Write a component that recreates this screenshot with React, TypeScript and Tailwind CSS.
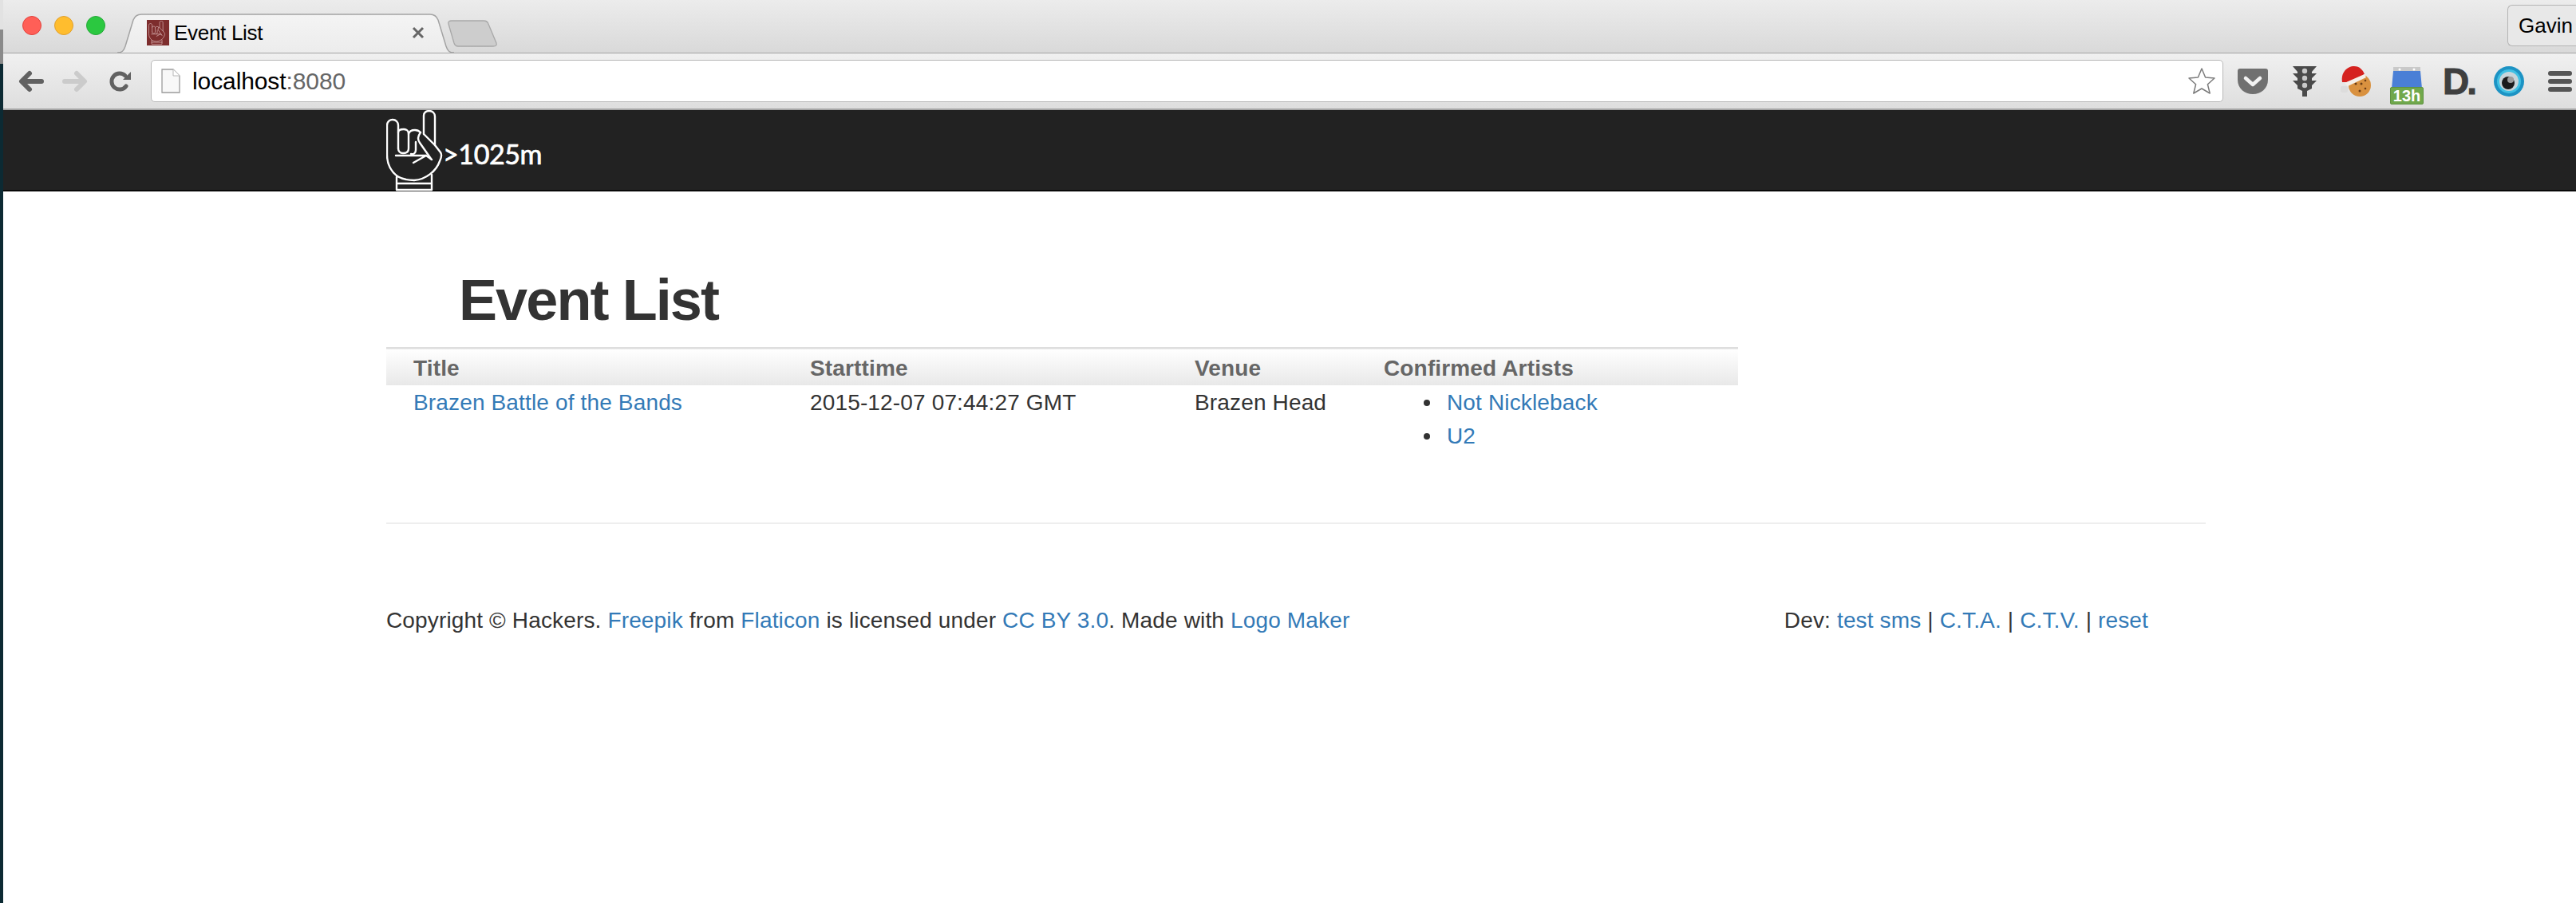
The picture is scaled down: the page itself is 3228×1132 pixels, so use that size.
import { Fragment } from 'react';

const FONT = "font-['Liberation_Sans',Arial,sans-serif]";

function Link({ children }: { children: React.ReactNode }) {
  return <a className="text-[#337ab7]">{children}</a>;
}

function TabShape() {
  return (
    <svg className="absolute inset-0" width="422" height="50" viewBox="0 0 422 50">
      <defs>
        <linearGradient id="tabFill" x1="0" y1="0" x2="0" y2="1">
          <stop offset="0" stopColor="#f4f4f4" />
          <stop offset="1" stopColor="#ececec" />
        </linearGradient>
      </defs>
      <path
        d="M0 49 C6 49 8 47 10 41 L20 8 C22 3 25 1 30 1 L392 1 C397 1 400 3 402 8 L412 41 C414 47 416 49 422 49"
        fill="url(#tabFill)"
        stroke="#a3a3a3"
        strokeWidth="1.5"
      />
    </svg>
  );
}

function HandLogo({ width, height, color }: { width: number; height: number; color: string }) {
  return (
    <svg width={width} height={height} viewBox="0 0 80 102" fill="none" stroke={color} strokeWidth="2.4" strokeLinecap="round" strokeLinejoin="round">
      <path d="M14 83 C5 76 1 66 1 56 L1 19 C1 14 5 12 8 12 C12 12 15 15 15 19 L15 48" />
      <path d="M15 28 C15 25 18 24 22 24 C26 24 28 27 28 30 L28 48 C28 52 25 54 21 54 C17 54 15 51 15 48" />
      <path d="M28 30 C29 26 32 25 36 25 C39 25 41 26 43 28 M37 40 L37 50 C37 54 34 56 31 55" />
      <path d="M47 30 L47 7 C47 3 50 1 54 1 C58 1 61 4 61 8 L61 44 L68 53 C70 56 69 60 67 64 C63 76 50 87 35 88 C27 88 19 86 14 83" />
      <path d="M43 28 C40 32 39 37 42 41 L56 61 M47 30 L61 44" />
      <path d="M12 57 L50 57 M34 66 L50 57 L57 62" />
      <path d="M13 84 L13 100 L57 100 L57 81 M13 92 L57 92" />
    </svg>
  );
}

function BackArrow({ color }: { color: string }) {
  return (
    <svg width="32" height="28" viewBox="0 0 32 28" fill="none" stroke={color} strokeWidth="6" strokeLinecap="round" strokeLinejoin="round">
      <path d="M29 14 L5 14 M14 4 L4 14 L14 24" />
    </svg>
  );
}

function ForwardArrow({ color }: { color: string }) {
  return (
    <svg width="32" height="28" viewBox="0 0 32 28" fill="none" stroke={color} strokeWidth="6" strokeLinecap="round" strokeLinejoin="round">
      <path d="M3 14 L27 14 M18 4 L28 14 L18 24" />
    </svg>
  );
}

function Reload() {
  return (
    <svg width="28" height="28" viewBox="0 0 28 28">
      <path d="M21 20 A10 10 0 1 1 20 7" fill="none" stroke="#616161" strokeWidth="5" strokeLinecap="round" />
      <path d="M17 12 L27 12 L27 2 Z" fill="#616161" />
    </svg>
  );
}

function PageIcon() {
  return (
    <svg width="24" height="32" viewBox="0 0 24 32">
      <path d="M1 1 L15 1 L23 9 L23 30 L1 30 Z" fill="#f8f8f8" stroke="#9c9c9c" strokeWidth="1.3" />
      <path d="M15 1 L15 9 L23 9" fill="#fff" stroke="#b5b5b5" strokeWidth="1" />
    </svg>
  );
}

function Star() {
  return (
    <svg width="36" height="36" viewBox="0 0 36 36">
      <path
        d="M18 2 L22.6 13 L34 14 L25.4 21.7 L28.2 33 L18 27 L7.8 33 L10.6 21.7 L2 14 L13.4 13 Z"
        fill="#fff"
        stroke="#7c7c7c"
        strokeWidth="1.5"
        strokeLinejoin="round"
      />
    </svg>
  );
}

function Pocket() {
  return (
    <svg width="38" height="34" viewBox="0 0 38 34">
      <path d="M3 1 L35 1 C37 1 38 2 38 4 L38 15 C38 26 29 33 19 33 C9 33 0 26 0 15 L0 4 C0 2 1 1 3 1 Z" fill="#707070" />
      <path d="M10 13 L19 21 L28 13" fill="none" stroke="#f2f2f2" strokeWidth="4.5" strokeLinecap="round" strokeLinejoin="round" />
    </svg>
  );
}

function TrafficLight() {
  return (
    <svg width="30" height="38" viewBox="0 0 30 38" fill="#4a4a4a">
      <path d="M0 0 L30 0 L24 7 L24 9 L30 9 L24 15 L24 18 L30 18 L24 24 L24 28 L18 31 L18 38 L12 38 L12 31 L6 28 L6 24 L0 18 L6 18 L6 15 L0 9 L6 9 L6 7 Z" />
      <circle cx="15" cy="6" r="3.2" fill="#c9c9c9" />
      <circle cx="15" cy="15" r="3.2" fill="#c9c9c9" />
      <circle cx="15" cy="24" r="3.2" fill="#c9c9c9" />
    </svg>
  );
}

function Cookie() {
  return (
    <svg width="38" height="38" viewBox="0 0 38 38">
      <circle cx="24" cy="24" r="14" fill="#d9913f" />
      <circle cx="19" cy="22" r="1.5" fill="#6b3d16" />
      <circle cx="26" cy="22" r="1.5" fill="#6b3d16" />
      <circle cx="31" cy="18" r="1.3" fill="#6b3d16" />
      <circle cx="24" cy="31" r="1.5" fill="#6b3d16" />
      <circle cx="31" cy="28" r="1.3" fill="#6b3d16" />
      <path d="M2 20 C0 8 8 0 17 0 C24 0 28 5 30 10 L8 20 Z" fill="#d5221f" />
      <path d="M5 21 L30 10 L32 14 L9 25 Z" fill="#f4efe9" />
      <rect x="0" y="25" width="9" height="8" rx="2" fill="#dcdcdc" />
    </svg>
  );
}

function Calendar() {
  return (
    <div className="relative h-[48px] w-[42px]">
      <svg className="ml-[2px]" width="38" height="30" viewBox="0 0 38 30">
        <path d="M2 1 L36 1 L36 8 L2 8 Z" fill="#c9c9c9" />
        <circle cx="10" cy="4" r="1.5" fill="#fff" />
        <circle cx="28" cy="4" r="1.5" fill="#fff" />
        <path d="M2 6 L36 6 L38 28 L0 28 Z" fill="#4a7fd6" />
      </svg>
      <span className={`${FONT} absolute bottom-0 left-0 flex h-[22px] w-[42px] items-center justify-center rounded-[2px] border border-[#5f9240] bg-[#70a84c] text-[20px] leading-none font-bold text-white`}>
        13h
      </span>
    </div>
  );
}

function DashLogo() {
  return (
    <span className={`${FONT} block w-[38px] text-[46px] leading-[34px] font-bold tracking-[-3px] text-[#3f3f3f] [-webkit-text-stroke:1px_#3f3f3f]`}>D.</span>
  );
}

function Eye() {
  return (
    <svg width="38" height="38" viewBox="0 0 38 38">
      <circle cx="19" cy="19" r="19" fill="#1c93c4" />
      <circle cx="19" cy="19" r="15" fill="#3fc0e3" />
      <circle cx="19" cy="19" r="12" fill="#c8d5da" />
      <circle cx="18" cy="21" r="8" fill="#1b1b1b" />
      <circle cx="21" cy="17" r="4" fill="#9c9c9c" />
    </svg>
  );
}

function Hamburger() {
  return (
    <div className="flex w-[30px] flex-col gap-[4px]">
      <div className="h-[6px] rounded-full bg-[#555]" />
      <div className="h-[6px] rounded-full bg-[#555]" />
      <div className="h-[6px] rounded-full bg-[#555]" />
    </div>
  );
}

function ArtistItem({ name }: { name: string }) {
  return (
    <li className="flex items-center gap-[21px]">
      <span className="h-[8px] w-[8px] rounded-full bg-[#333]" />
      <Link>{name}</Link>
    </li>
  );
}

const FOOTER_DEV = ['test sms', 'C.T.A.', 'C.T.V.', 'reset'];

export default function App() {
  return (
    <div className={`${FONT} flex h-[1132px] overflow-hidden bg-white`}>
      {/* desktop peeking out on the left */}
      <div className="flex w-[4px] shrink-0 flex-col">
        <div className="h-[37px] bg-[#e2e2e2]" />
        <div className="h-[43px] bg-[#8a8a8a]" />
        <div className="flex-1 bg-[#0c2a33]" />
      </div>

      <div className="flex min-w-0 flex-1 flex-col">
        {/* tab strip */}
        <div className="flex h-[67px] shrink-0 items-end justify-between border-b border-[#a3a3a3] bg-gradient-to-b from-[#ececec] to-[#d9d9d9]">
          <div className="flex items-end">
            <div className="flex h-[50px] w-[143px] items-end gap-[16px] pb-[22px] pl-[24px]">
              <span className="h-[24px] w-[24px] rounded-full border border-[#e2443f] bg-[#ff5f57]" />
              <span className="h-[24px] w-[24px] rounded-full border border-[#e0a030] bg-[#ffbd2e]" />
              <span className="h-[24px] w-[24px] rounded-full border border-[#27a83a] bg-[#2bc840]" />
            </div>
            <div className="relative -mb-px h-[50px] w-[422px]">
              <TabShape />
              <div className="relative flex h-full items-start pt-[8px] pl-[37px]">
                <div className="flex h-[32px] w-[28px] items-center justify-center bg-[#7d2d2d]">
                  <HandLogo width={24} height={30} color="#d8b2b2" />
                </div>
                <span className="ml-[6px] text-[26px] leading-[32px] tracking-[-0.3px] text-black">Event List</span>
                <svg className="absolute top-[16px] left-[369px]" width="16" height="16" viewBox="0 0 16 16">
                  <path d="M2 2 L14 14 M14 2 L2 14" stroke="#666" strokeWidth="3" />
                </svg>
              </div>
            </div>
            <svg className="mb-[7px] -ml-[9px]" width="64" height="34" viewBox="0 0 64 34">
              <path d="M2 5 C1 2 3 1 6 1 L46 1 C49 1 51 2 52 5 L62 29 C63 32 61 33 58 33 L14 33 C11 33 10 32 9 29 Z" fill="#cdcdcd" stroke="#a8a8a8" strokeWidth="1.3" />
            </svg>
          </div>
          <div className="mb-[8px] flex h-[52px] w-[86px] items-center rounded-l-[6px] border border-r-0 border-[#b4b4b4] bg-[#e8e8e8] pl-[13px] text-[26px] text-black">
            Gavin
          </div>
        </div>

        {/* toolbar */}
        <div className="flex h-[71px] shrink-0 items-center border-b-2 border-[#a6a6a6] bg-gradient-to-b from-[#f0f0f0] to-[#dedede] pr-[2px] pl-[19px]">
          <BackArrow color="#616161" />
          <div className="ml-[23px]">
            <ForwardArrow color="#cbcbcb" />
          </div>
          <div className="ml-[27px]">
            <Reload />
          </div>
          <div className="ml-[24px] flex h-[53px] w-[2597px] items-center rounded-[5px] border border-[#b8b8b8] bg-white pr-[8px] pl-[12px]">
            <PageIcon />
            <span className="ml-[15px] text-[30px] tracking-[-0.1px] text-black">
              localhost<span className="text-[#666]">:8080</span>
            </span>
            <div className="ml-auto">
              <Star />
            </div>
          </div>
          <div className="ml-[18px] flex items-center">
            <Pocket />
            <div className="ml-[31px]"><TrafficLight /></div>
            <div className="ml-[30px]"><Cookie /></div>
            <div className="mt-[10px] ml-[24px]"><Calendar /></div>
            <div className="ml-[24px]"><DashLogo /></div>
            <div className="ml-[26px]"><Eye /></div>
            <div className="ml-[30px]"><Hamburger /></div>
          </div>
        </div>

        {/* site navbar */}
        <div className="flex h-[102px] shrink-0 items-stretch border-b-2 border-[#080808] bg-[#222] pl-[480px]">
          <HandLogo width={80} height={102} color="#fff" />
          <span className="mt-[33px] -ml-[9px] font-['Lato',sans-serif] text-[34px] leading-[44px] tracking-[-0.4px] text-white [-webkit-text-stroke:0.7px_#fff]">&gt;1025m</span>
        </div>

        {/* page */}
        <div className="ml-[480px] w-[2280px] pt-[96px] text-[28px] leading-[42px] tracking-[0.15px] text-[#333]">
          <h1 className="pl-[91px] text-[72px] leading-[80px] font-semibold tracking-[-1.9px] text-[#333]">Event List</h1>
          <table className="mt-[19px] w-[1694px] table-fixed border-collapse">
            <thead>
              <tr className="h-[47px] border-t-2 border-[#dedede] bg-gradient-to-b from-white to-[#e8e8e8] text-left text-[#666]">
                <th className="w-[497px] pt-[3px] pl-[34px] font-bold">Title</th>
                <th className="w-[482px] pt-[3px] pl-[34px] font-bold">Starttime</th>
                <th className="w-[237px] pt-[3px] pl-[34px] font-bold">Venue</th>
                <th className="w-[478px] pt-[3px] pl-[34px] font-bold">Confirmed Artists</th>
              </tr>
            </thead>
            <tbody>
              <tr>
                <td className="pt-[1px] pl-[34px] align-top"><Link>Brazen Battle of the Bands</Link></td>
                <td className="pt-[1px] pl-[34px] align-top">2015-12-07 07:44:27 GMT</td>
                <td className="pt-[1px] pl-[34px] align-top">Brazen Head</td>
                <td className="pt-[1px] pl-[34px] align-top">
                  <ul className="pl-[50px]">
                    <ArtistItem name="Not Nickleback" />
                    <ArtistItem name="U2" />
                  </ul>
                </td>
              </tr>
            </tbody>
          </table>
          <hr className="mt-[87px] border-t-2 border-[#eee]" />
          <div className="mt-[100px] flex justify-between pr-[72px]">
            <p>
              Copyright © Hackers. <Link>Freepik</Link> from <Link>Flaticon</Link> is licensed under{' '}
              <Link>CC BY 3.0</Link>. Made with <Link>Logo Maker</Link>
            </p>
            <p>
              Dev:{' '}
              {FOOTER_DEV.map((item, i) => (
                <Fragment key={item}>
                  {i > 0 && ' | '}
                  <Link>{item}</Link>
                </Fragment>
              ))}
            </p>
          </div>
        </div>
      </div>
    </div>
  );
}
